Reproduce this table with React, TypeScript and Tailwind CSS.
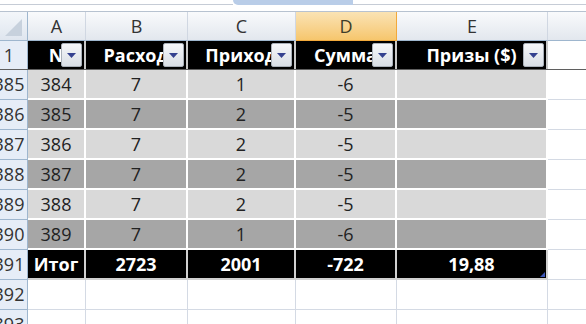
const cols = 'grid grid-cols-[28px_58px_102px_108px_101px_151px_1fr]';
const font = { fontFamily: '"Open Sans", "Noto Sans", sans-serif' };

type Row = { n: number; a: string; b: string; c: string; d: string; shade: 'light' | 'dark' };

const rows: Row[] = [
  { n: 385, a: '384', b: '7', c: '1', d: '-6', shade: 'light' },
  { n: 386, a: '385', b: '7', c: '2', d: '-5', shade: 'dark' },
  { n: 387, a: '386', b: '7', c: '2', d: '-5', shade: 'light' },
  { n: 388, a: '387', b: '7', c: '2', d: '-5', shade: 'dark' },
  { n: 389, a: '388', b: '7', c: '2', d: '-5', shade: 'light' },
  { n: 390, a: '389', b: '7', c: '1', d: '-6', shade: 'dark' },
];

function FilterButton() {
  return (
    <div className="absolute right-[2px] top-[2px] flex h-[24px] w-[21px] items-center justify-center rounded-[2px] border border-[#a9b0b9] bg-gradient-to-b from-[#f6f7f9] to-[#d9dee5]">
      <svg width="9" height="5" viewBox="0 0 9 5">
        <path d="M0 0h9L4.5 5z" fill="#34418f" />
      </svg>
    </div>
  );
}

function RowHead({ label, className = '' }: { label: string; className?: string }) {
  return (
    <div className={`flex items-center overflow-hidden border-r border-b border-[#9eb6ce] bg-[#e6edf7] text-[18px] text-[#333] ${className}`}>
      <div className="ml-[-9px] w-[36px] shrink-0 text-center">{label}</div>
    </div>
  );
}

function ColHead({ label, active = false }: { label: string; active?: boolean }) {
  return (
    <div
      className={`flex items-center justify-center border-r border-b text-[18px] ${
        active
          ? 'border-[#f2a93b] border-b-[#f2a93b] bg-gradient-to-b from-[#fae3b4] to-[#f6c66c] text-[#3d3d2a]'
          : 'border-[#d0d7e2] border-b-[#9eb6ce] bg-gradient-to-b from-[#f9fafc] to-[#e2e7ee] text-[#333]'
      }`}
    >
      {label}
    </div>
  );
}

function TitleCell({ label }: { label: string }) {
  return (
    <div className="relative flex items-center justify-center overflow-hidden border-r-2 border-[#c9c9c9] bg-black text-[18px] font-bold text-white">
      <span className="whitespace-nowrap">{label}</span>
      <FilterButton />
    </div>
  );
}

export default function App() {
  return (
    <div className="h-[324px] w-[586px] overflow-hidden bg-white" style={font}>
      {/* ribbon edge */}
      <div className="flex h-[5px]">
        <div className="w-[233px] border-b border-[#c6ccd6]" />
        <div className="w-[120px] rounded-bl-[8px] bg-[#b9cde8]" />
        <div className="flex-1 border-b border-[#c6ccd6]" />
      </div>
      <div className="h-[7px] border-b border-[#b7c2d0]" />

      {/* column letters */}
      <div className={`${cols} h-[29px]`}>
        <div className="relative border-r border-b border-[#9eb6ce] bg-gradient-to-b from-[#f3f6fa] to-[#dfe6ef]">
          <svg className="absolute right-[5px] bottom-[4px]" width="17" height="17" viewBox="0 0 17 17">
            <path d="M17 0v17H0z" fill="#c7d1dd" />
          </svg>
        </div>
        <ColHead label="A" />
        <ColHead label="B" />
        <ColHead label="C" />
        <ColHead label="D" active />
        <ColHead label="E" />
        <div className="border-b border-[#9eb6ce] bg-gradient-to-b from-[#f9fafc] to-[#e2e7ee]" />
      </div>

      {/* table header row */}
      <div className={`${cols} h-[29px] border-b border-[#5f5f5f]`}>
        <RowHead label="1" className="border-b-0" />
        <TitleCell label="N" />
        <TitleCell label="Расход" />
        <TitleCell label="Приход" />
        <TitleCell label="Сумма" />
        <TitleCell label="Призы ($)" />
        <div />
      </div>

      {rows.map((r) => {
        const bg = r.shade === 'light' ? 'bg-[#d9d9d9]' : 'bg-[#a6a6a6]';
        const cell = `flex items-center justify-center border-r-2 border-b-2 border-white text-[18px] text-[#222] ${bg}`;
        return (
          <div key={r.n} className={`${cols} h-[30px]`}>
            <RowHead label={String(r.n)} />
            <div className={cell}>{r.a}</div>
            <div className={cell}>{r.b}</div>
            <div className={cell}>{r.c}</div>
            <div className={cell}>{r.d}</div>
            <div className={cell} />
            <div className="border-b border-[#d4dae4]" />
          </div>
        );
      })}

      {/* totals */}
      <div className={`${cols} h-[30px]`}>
        <RowHead label="391" />
        {['Итог', '2723', '2001', '-722', '19,88'].map((v, i) => (
          <div
            key={i}
            className="relative flex items-center justify-center border-r-2 border-b-2 border-[#d0d0d0] bg-black text-[18px] font-bold text-white"
          >
            {v}
            {i === 4 && <div className="absolute right-[1px] bottom-[1px] h-[5px] w-[5px] bg-[#3c56b8] [clip-path:polygon(100%_0,100%_100%,0_100%)]" />}
          </div>
        ))}
        <div className="border-b border-[#d4dae4]" />
      </div>

      {[392, 393].map((n) => (
        <div key={n} className={`${cols} h-[30px]`}>
          <RowHead label={String(n)} />
          {[0, 1, 2, 3, 4].map((i) => (
            <div key={i} className="border-r border-b border-[#d4dae4]" />
          ))}
          <div className="border-b border-[#d4dae4]" />
        </div>
      ))}
    </div>
  );
}
